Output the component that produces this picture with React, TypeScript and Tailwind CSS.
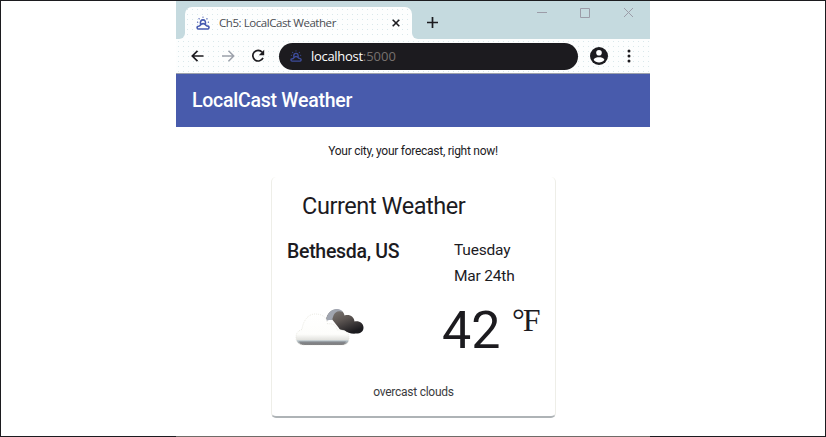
import React from "react";

function WeatherMark({ color, className }: { color: string; className: string }) {
  return (
    <svg viewBox="0 0 14 14" className={className} fill="none" stroke={color} strokeWidth="1.6" strokeLinecap="round">
      <path d="M2.600 13h8.800a1.500 1.500 0 0 0 .6-2.900c-1-.1-1.800-.3-2.200-1a3.200 3.200 0 0 0-5.400 0c-.4.700-1 1-2 1.100A1.400 1.400 0 0 0 2.600 13z" />
      <path d="M4.600 8.200C3.800 5.300 5.300 3.900 7 3.900s2.900 1.300 2.400 4.200" />
      <path d="M7 1v.2M3 2.700l.2.200M11 2.700l-.2.200M1.500 6.200h.2M12.300 6.200h.2" strokeWidth="1.200" />
    </svg>
  );
}

function TabStrip() {
  return (
    <div className="flex h-[38px] items-end bg-[#c5dadf]">
      <div className="h-full w-[9px] bg-[#fbfdfd]">
        <div className="h-full w-full rounded-br-[6px] bg-[#c5dadf]" />
      </div>
      <div className="flex h-8 w-[227px] items-center rounded-t-[7px] bg-[#fdfefe] bg-[radial-gradient(#d9e8eb_0.6px,transparent_0.8px)] bg-[size:5px_5px] pl-[11px]">
        <WeatherMark color="#4559b0" className="h-[14px] w-[14px]" />
        <span className="ml-[9px] w-[173px] whitespace-nowrap font-['Open_Sans',sans-serif] text-[11.500px] leading-4 tracking-[-0.44px] text-[#4a4c52]">
          Ch5: LocalCast Weather
        </span>
        <svg className="h-2 w-2" viewBox="0 0 8 8" stroke="#1c1b1f" strokeWidth="1.6">
          <path d="M.7.7l6.600 6.600M7.300.7L.7 7.300" />
        </svg>
      </div>
      <div className="h-8 flex-1 bg-[#fdfefe]">
        <div className="flex h-full items-start rounded-bl-[6px] bg-[#c5dadf] pl-[15px]">
          <svg className="mt-[10px] h-[11px] w-[11px]" viewBox="0 0 11 11" stroke="#1c1b1f" strokeWidth="1.700">
            <path d="M5.500 0v11M0 5.500h11" />
          </svg>
          <svg className="ml-[99px] h-[11px] w-[96px]" viewBox="0 0 96 11" fill="none" stroke="#9c9ca8">
            <path d="M0 5.500h10M43.500 1.500h9v9h-9zM87 1l9 9M96 1l-9 9" />
          </svg>
        </div>
      </div>
    </div>
  );
}

function Toolbar() {
  return (
    <div className="flex h-[34px] items-center bg-[#fdfefe] bg-[radial-gradient(#d9e8eb_0.6px,transparent_0.8px)] bg-[size:5px_5px] pl-[15px]">
      <svg className="h-3 w-[13px]" viewBox="0 0 13 12" fill="none" stroke="#1c1b1f" strokeWidth="1.700">
        <path d="M12.500 6H1.500M6.500.8L1.300 6l5.200 5.200" />
      </svg>
      <svg className="ml-[18px] h-3 w-[13px]" viewBox="0 0 13 12" fill="none" stroke="#9ca1ab" strokeWidth="1.500">
        <path d="M0 6h11.500M6.500.8L11.700 6l-5.200 5.200" />
      </svg>
      <svg className="ml-4 h-[14px] w-[14px]" viewBox="0 0 14 14" fill="none" stroke="#1c1b1f" strokeWidth="1.700">
        <path d="M11.200 3.300A5.300 5.300 0 1 0 12 8.800" />
        <path d="M13.200.8v5.400H7.800z" fill="#1c1b1f" stroke="none" />
      </svg>
      <div className="ml-[14px] flex h-[27px] w-[299px] items-center rounded-full bg-[#1c1b1f] pl-[11px]">
        <WeatherMark color="#3d4c9c" className="h-3 w-3" />
        <span className="ml-[9px] whitespace-nowrap font-['Open_Sans',sans-serif] text-[13px] leading-4 text-white">
          <span className="font-medium tracking-[-0.3px]">localhost</span>
          <span className="text-[#77716e]">:5000</span>
        </span>
      </div>
      <svg className="ml-3 h-[18px] w-[18px]" viewBox="0 0 18 18">
        <circle cx="9" cy="9" r="9" fill="#1c1b1f" />
        <circle cx="9" cy="5.800" r="2.800" fill="#fff" />
        <path d="M3.600 12.700C4.300 10.800 7 10.200 9 10.200s4.700.6 5.400 2.500C13.200 14.500 11.200 15.500 9 15.500s-4.200-1-5.400-2.800z" fill="#fff" />
      </svg>
      <svg className="ml-[19px] h-[14px] w-[4px]" viewBox="0 0 4 14" fill="#1c1b1f">
        <circle cx="2" cy="2" r="1.500" />
        <circle cx="2" cy="7" r="1.500" />
        <circle cx="2" cy="12" r="1.500" />
      </svg>
    </div>
  );
}

function CloudArt() {
  return (
    <svg className="h-[40px] w-[70px]" viewBox="0 0 70 40">
      <defs>
        <linearGradient id="front" x1="0" y1="0" x2="0" y2="1">
          <stop offset="0" stopColor="#fff" />
          <stop offset=".65" stopColor="#fdfdfb" />
          <stop offset=".83" stopColor="#e3e3df" />
          <stop offset=".87" stopColor="#b3c0c8" />
          <stop offset="1" stopColor="#8a8685" />
        </linearGradient>
        <linearGradient id="back" x1="0" y1="0" x2=".6" y2="1">
          <stop offset="0" stopColor="#85817d" />
          <stop offset=".5" stopColor="#5e5754" />
          <stop offset="1" stopColor="#1c1b1f" />
        </linearGradient>
      </defs>
      <path d="M31 12C32 4 38 1 42 1.500c4 .2 7 2.500 7.500 6C55 6 59 9 59.500 13.500c5-1 9 2 9 6 0 4-3 6-7 6-5 .5-9-.5-12-3-3 .5-5-1-6-3L36 10z" fill="url(#back)" />
      <path d="M31 13C32 4 38 .5 42 1c3 .2 5 1.500 6 3-5-2-8 0-9.500 3.500L37 12h-3z" fill="#a0a5b0" />
      <path d="M9 37c-5 0-8-3-8-7.500 0-4 2-7 6-8C8 13 13 6 20 6s12 3 12.500 10c5-1 9 1 9.500 6 8-1 12 3 12 8s-3 7-7 7z" fill="url(#front)" stroke="#e5e4dc" strokeWidth=".8" strokeDasharray="1 1" />
      <path d="M4 33.500h47c-1 2.500-3 3.500-5 3.500H10c-3 0-5-1-6-3.500z" fill="#706f73" opacity=".6" />
    </svg>
  );
}

function WeatherCard() {
  return (
    <section className="ml-[95px] mt-[18px] flex h-[241px] w-[285px] flex-col rounded-[5px] border-x border-b-2 border-x-[#eeeee8] border-b-[#aeb3b6] px-[15px] pt-[13px]">
      <h2 className="ml-[15px] whitespace-nowrap text-[23.500px] font-normal leading-8 tracking-[-0.42px]">Current Weather</h2>
      <div className="mt-[11px] flex justify-between">
        <h3 className="whitespace-nowrap text-[19.500px] font-medium leading-[37px] tracking-[-0.3px]">Bethesda, US</h3>
        <div className="w-[86px] whitespace-nowrap pt-1 text-[15.500px] leading-[26px] tracking-[-0.2px]">
          <p>Tuesday</p>
          <p>Mar 24th</p>
        </div>
      </div>
      <div className="mt-[17px] flex h-[54px] items-start">
        <div className="ml-[8px] mt-[2px] w-[147px]"><CloudArt /></div>
        <span className="w-[70px] pt-px text-[52px] leading-[47px]">42</span>
        <span className="font-['Liberation_Serif',serif] text-[32px] leading-[28px] tracking-[-2px]">°F</span>
      </div>
      <p className="mt-6 text-center text-[12px] leading-4 tracking-[-0.25px] text-[#3b3b40]">overcast clouds</p>
    </section>
  );
}

export default function App() {
  return (
    <div className="flex h-[437px] w-[826px] flex-col bg-[#1c1b1f] px-px pt-px font-[Roboto,sans-serif] text-[#1c1b1f]">
      <div className="flex h-[435px] justify-center bg-white">
        <main className="w-[474px]">
          <TabStrip />
          <Toolbar />
          <header className="h-[54px] border-t border-[#9ca1ab] bg-[#485bac] pl-4 pt-[15px]">
            <h1 className="whitespace-nowrap text-[19.500px] font-medium leading-6 tracking-[-0.25px] text-white">LocalCast Weather</h1>
          </header>
          <p className="mt-4 text-center text-[12px] leading-4 tracking-[-0.27px]">Your city, your forecast, right now!</p>
          <WeatherCard />
        </main>
      </div>
      <div className="ml-[175px] h-px w-[474px] bg-[#706b68]" />
    </div>
  );
}
